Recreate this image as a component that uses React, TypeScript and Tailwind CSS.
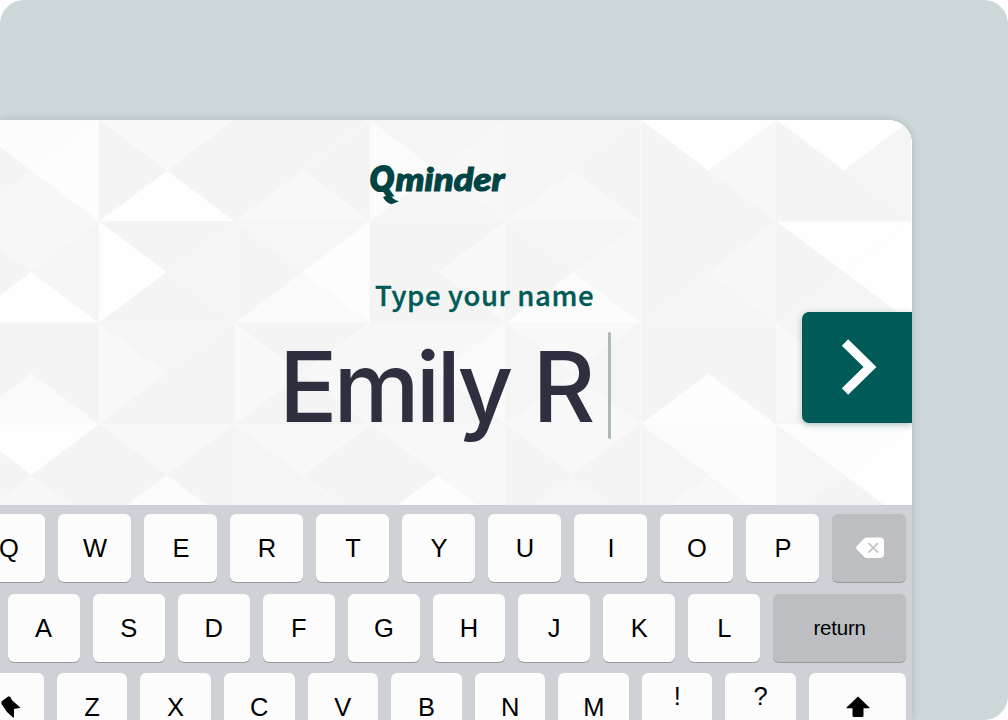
import React from "react";

// Each tile lists the greys of its top, right, bottom and left triangles.
const TILES: string[][] = [
  ["fc fd f7 f4", "f9 f4 fe f4", "f4 f4 f8 f4", "f5 f7 f5 fb", "f5 f4 f8 f5", "fe f7 f4 f4", "fe f5 f4 f4"],
  ["f7 f5 fe f4", "f4 f5 f4 fe", "f6 fd fa f4", "f4 f9 f4 f4", "f5 f7 fc f4", "f4 f7 f5 f4", "fe fe f5 f4"],
  ["f4 f4 fa f4", "f5 f4 f4 f8", "f4 f7 f4 f9", "f7 fa f5 f6", "f8 f5 f8 f5", "f4 f4 fd f4", "f5 f5 f7 f9"],
  ["fe f4 f7 f4", "f8 f4 fc f4", "f8 f4 f5 f5", "f8 f8 fd f4", "f8 f4 f6 f4", "fb fc f8 f5", "fd fe f4 f6"],
];
const TW = 135.4;
const TH = 101.4;

function Mesh() {
  return (
    <svg className="absolute inset-0" width="912" height="385" viewBox="0 0 912 385" shapeRendering="geometricPrecision">
      <rect width="912" height="385" fill="#f5f5f5" />
      {TILES.flatMap((row, r) =>
        row.map((cell, c) => {
          const x0 = -36.4 + c * TW;
          const y0 = r * TH;
          const x1 = x0 + TW;
          const y1 = y0 + TH;
          const m = `${x0 + TW / 2},${y0 + TH / 2}`;
          const [t, ri, b, l] = cell.split(" ").map((g) => `#${g}${g}${g}`);
          return (
            <g key={`${r}-${c}`}>
              <polygon points={`${x0},${y0} ${x1},${y0} ${m}`} fill={t} />
              <polygon points={`${x1},${y0} ${x1},${y1} ${m}`} fill={ri} />
              <polygon points={`${x0},${y1} ${x1},${y1} ${m}`} fill={b} />
              <polygon points={`${x0},${y0} ${x0},${y1} ${m}`} fill={l} />
              {c === 2 && r !== 1 && (
                <polyline points={`${x1},${y0} ${m} ${x1},${y1}`} fill="none" stroke="#fdfdfd" strokeWidth="0.7" />
              )}
            </g>
          );
        }),
      )}
      <path d="M640.5 0V385" stroke="#fbfbfb" strokeWidth="0.6" />
      <path d="M911.5 0V385" stroke="#fff" strokeWidth="1" />
    </svg>
  );
}

function Logo() {
  return (
    <div className="h-[42px] w-[137px] text-[#004443]">
      <svg className="overflow-visible" width="137" height="42" viewBox="0 0 137 42">
        <text x="1" y="28" textLength="24" lengthAdjust="spacingAndGlyphs" fill="currentColor" stroke="currentColor" strokeWidth="2.2" fontFamily="Lato, sans-serif" fontWeight="900" fontStyle="italic" fontSize="34">Q</text>
        <text x="26.500" y="28.200" textLength="109" lengthAdjust="spacingAndGlyphs" fill="currentColor" stroke="currentColor" strokeWidth="1.1" fontFamily="Lato, sans-serif" fontWeight="900" fontStyle="italic" fontSize="32">minder</text>
        <path d="M14 34L21 31.500C23 35 25.500 37 30 38.300L22.500 41.300C18.500 40.300 16 38 14 34Z" fill="currentColor" />
      </svg>
    </div>
  );
}

const KEY = "flex shrink-0 items-center justify-center rounded-[6px] shadow-[0_1px_0_#96989d]";
const LIGHT = "bg-[#fcfcfc] text-[25.5px] text-black";
const DARK = "bg-[#bcbec2]";

function Key({ children, className }: { children?: React.ReactNode; className: string }) {
  return <div className={`${KEY} ${className}`}>{children}</div>;
}

function Keyboard() {
  return (
    <div className="h-[216px] overflow-hidden border-t border-[#dfe1e3] bg-[#ced1d5] font-['Liberation_Sans',Arial,sans-serif]">
      <div className="mt-[9px] ml-[-28px] flex h-[68px] gap-[13px]">
        {"QWERTYUIOP".split("").map((k) => (
          <Key key={k} className={`${LIGHT} w-[73px] pl-[1px]`}>{k}</Key>
        ))}
        <Key className={`${DARK} w-[74px]`}>
          <svg className="ml-[2px]" width="28" height="22" viewBox="0 0 28 22">
            <path d="M8.500 1.200Q9.400.5 10.600.5H24Q28 .5 28 4.500V17Q28 21 24 21H10.600Q9.400 21 8.500 20.200L.7 12.200Q-.5 10.800.7 9.300Z" fill="#fff" />
            <path d="M12.500 6L22 15.500M22 6L12.500 15.500" stroke="#bcbec2" strokeWidth="1.7" />
          </svg>
        </Key>
      </div>
      <div className="mt-[11.5px] ml-[7.5px] flex h-[68px] gap-[13px]">
        {"ASDFGHJKL".split("").map((k) => (
          <Key key={k} className={`${LIGHT} w-[72.1px] pt-[2px]`}>{k}</Key>
        ))}
        <Key className={`${DARK} w-[132.5px] pt-[2px] text-[20.5px] tracking-[-0.2px] text-black`}>return</Key>
      </div>
      <div className="mt-[11.5px] ml-[-27px] flex h-[68px] gap-[13px]">
        <Key className={`${LIGHT} w-[70.6px] justify-start`}>
          <svg className="ml-[27px]" width="21" height="28" viewBox="0 0 21 28">
            <path d="M1.500 8.500L8.500 3.200 10.500 4 12 7.200 20.500 14.800 14 16V24.500H13L7 19 1.500 11Z" fill="#000" />
          </svg>
        </Key>
        {"ZXCVBNM".split("").map((k) => (
          <Key key={k} className={`${LIGHT} w-[70.65px]`}>{k}</Key>
        ))}
        {"!?".split("").map((k) => (
          <Key key={k} className={`${LIGHT} w-[70.4px] pb-[21px]`}>{k}</Key>
        ))}
        <Key className={`${LIGHT} w-[97px]`}>
          <svg className="ml-[2px]" width="24" height="22" viewBox="0 0 24 22">
            <path d="M12 .5L23.500 11.500Q23.800 12.300 23 12.300H17.500V19.500Q17.500 21 16 21H8Q6.500 21 6.500 19.500V12.300H1Q.2 12.300.5 11.500Z" fill="#000" />
          </svg>
        </Key>
      </div>
    </div>
  );
}

export default function App() {
  return (
    <div className="h-[720px] w-[1008px] overflow-hidden bg-white">
      <div className="h-full w-full overflow-hidden rounded-[24px] rounded-bl-none bg-[#ced7da] pt-[120px]">
        <div className="h-[600px] w-[912px] rounded-tr-[24px] shadow-[0_0_8px_rgba(0,60,60,0.18)]">
          <div className="h-full overflow-hidden rounded-tr-[24px] bg-[#f5f5f5]">
            <div className="relative flex h-[384px] w-[912px] flex-col">
              <Mesh />
              <div className="relative mt-[43px] ml-[369px]">
                <Logo />
              </div>
              <div className="relative mt-[70px] ml-[375px] h-[38px] whitespace-nowrap font-['Noto_Sans_CJK_SC',sans-serif] text-[27.500px] leading-[38px] font-medium tracking-[0.62px] text-[#005a58] [-webkit-text-stroke:0.35px_#005a58]">
                Type your name
              </div>
              <div className="relative mt-[18px] ml-[279px] flex h-[108px] items-center gap-[12px]">
                <span className="w-[317px] pt-[4px] whitespace-nowrap font-['Inter',sans-serif] text-[97px] leading-[108px] font-medium tracking-[-3.9px] text-[#2f303f] [word-spacing:1px]">Emily R</span>
                <span className="h-[107px] w-[3px] rounded-full bg-[#afb9ba]" />
              </div>
              <div className="absolute top-[192px] right-0 flex h-[111px] w-[110px] items-center rounded-l-[7px] bg-[#005a58] pb-[1px] pl-[39px] shadow-[0_2px_7px_rgba(0,70,75,0.3)]">
                <svg width="36" height="56" viewBox="0 0 36 56">
                  <path d="M4 3.500L29 28 4 52.500" fill="none" stroke="#fff" strokeWidth="9" />
                </svg>
              </div>
            </div>
            <Keyboard />
          </div>
        </div>
      </div>
    </div>
  );
}
